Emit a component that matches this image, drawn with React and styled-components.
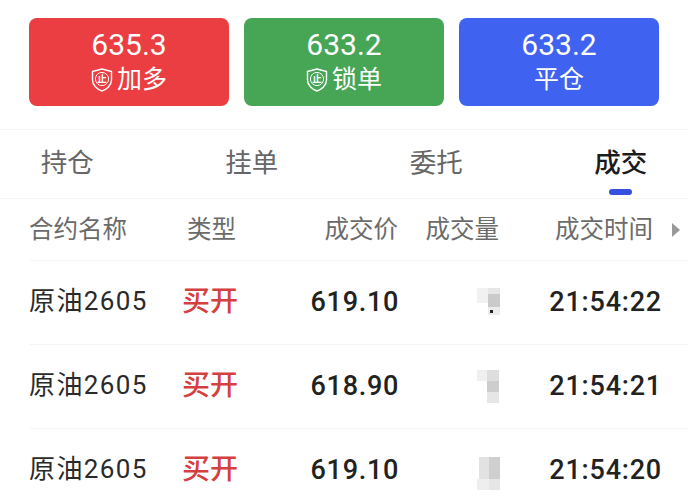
import styled, { createGlobalStyle } from 'styled-components'

const GlobalStyle = createGlobalStyle`
  html, body {
    margin: 0;
    background: #fff;
    font-family: Roboto, 'Noto Sans CJK SC', sans-serif;
  }
`

const actions = [
  { price: '635.3', label: '加多', color: '#eb3e42', shield: true },
  { price: '633.2', label: '锁单', color: '#47a556', shield: true },
  { price: '633.2', label: '平仓', color: '#3f63f0', shield: false },
]

const tabs = ['持仓', '挂单', '委托', '成交']

const trades = [
  {
    price: '619.10',
    time: '21:54:22',
    top: 27,
    blocks: [
      [0, 0, 11, 15, '#f1f1f1'],
      [11, 0, 12, 6, '#e6e6e6'],
      [11, 6, 12, 13, '#cacaca'],
      [11, 19, 12, 8, '#ececec'],
      [13, 22, 3, 3, '#222'],
    ],
  },
  {
    price: '618.90',
    time: '21:54:21',
    top: 25,
    blocks: [
      [0, 0, 10, 11, '#efefef'],
      [10, 0, 12, 11, '#dedede'],
      [10, 11, 12, 11, '#cdcdcd'],
      [10, 22, 12, 11, '#e6e6e6'],
    ],
  },
  {
    price: '619.10',
    time: '21:54:20',
    top: 28,
    blocks: [
      [2, 0, 10, 22, '#e2e2e2'],
      [12, 0, 11, 22, '#cfcfcf'],
      [0, 22, 12, 11, '#eeeeee'],
      [12, 22, 11, 11, '#e6e6e6'],
    ],
  },
]

const ShieldIcon = () => (
  <svg width="22" height="24" viewBox="0 0 22 24" fill="none">
    <path
      d="M11 1 L20.5 3.5 V12 C20.5 17.5 15.5 21.5 11 23 C6.5 21.5 1.5 17.5 1.5 12 V3.5 Z"
      stroke="currentColor"
      strokeWidth="1.4"
      strokeLinejoin="round"
    />
    <circle cx="11" cy="11" r="6.6" stroke="currentColor" strokeWidth="1" />
    <text x="11" y="14.4" fontSize="9.5" fontWeight="700" textAnchor="middle" fill="currentColor">止</text>
  </svg>
)

const App = () => {
  return (
    <Page>
      <GlobalStyle />
      <Actions>
        {actions.map((item) => (
          <ActionButton key={item.label} color={item.color}>
            <Price>{item.price}</Price>
            <ActionLabel>
              {item.shield && <ShieldIcon />}
              {item.label}
            </ActionLabel>
          </ActionButton>
        ))}
      </Actions>
      <Tabs>
        {tabs.map((tab, i) => (
          <Tab key={tab} active={i === 3}>{tab}</Tab>
        ))}
      </Tabs>
      <HeaderRow>
        <HeaderCell>合约名称</HeaderCell>
        <HeaderCell indent="4px">类型</HeaderCell>
        <HeaderCell right>成交价</HeaderCell>
        <HeaderCell right>成交量</HeaderCell>
        <TimeHeader>
          成交时间
          <MoreArrow />
        </TimeHeader>
      </HeaderRow>
      {trades.map((trade, i) => (
        <TradeRow key={i}>
          <Name>原油2605</Name>
          <Side>买开</Side>
          <Num>{trade.price}</Num>
          <Volume top={trade.top}>
            <Mosaic width="23" height="33" viewBox="0 0 23 33">
              {trade.blocks.map((b, j) => (
                <rect key={j} x={b[0]} y={b[1]} width={b[2]} height={b[3]} fill={b[4]} />
              ))}
            </Mosaic>
          </Volume>
          <Time>{trade.time}</Time>
        </TradeRow>
      ))}
    </Page>
  )
}

const Page = styled.div`
  width: 688px;
  height: 500px;
  overflow: hidden;
  background: #fff;
`

const Actions = styled.div`
  display: flex;
  gap: 15px;
  padding: 18px 29px 23px;
  border-bottom: 1px solid #f4f4f4;
`

const ActionButton = styled.div`
  width: 200px;
  height: 88px;
  box-sizing: border-box;
  padding-top: 9px;
  border-radius: 8px;
  background: ${(props) => props.color};
  color: #fff;
  display: flex;
  flex-direction: column;
  align-items: center;
`

const Price = styled.div`
  font-size: 30px;
  line-height: 36px;
`

const ActionLabel = styled.div`
  display: flex;
  align-items: center;
  gap: 4px;
  font-size: 25px;
  line-height: 34px;
`

const Tabs = styled.div`
  display: grid;
  grid-template-columns: repeat(4, 184.5px);
  height: 68px;
  margin-left: -25px;
  border-bottom: 1px solid #f4f4f4;
  width: 713px;
`

const Tab = styled.div`
  position: relative;
  text-align: center;
  font-size: 26.5px;
  line-height: 66px;
  color: ${(props) => (props.active ? '#1c1c1c' : '#666')};
  font-weight: ${(props) => (props.active ? 500 : 400)};
  &::after {
    content: '';
    display: ${(props) => (props.active ? 'block' : 'none')};
    position: absolute;
    left: 50%;
    bottom: 3px;
    width: 23px;
    height: 6px;
    margin-left: -12px;
    border-radius: 3px;
    background: #3450e0;
  }
`

const HeaderRow = styled.div`
  display: grid;
  grid-template-columns: 153px 117px 98px 101px 189px;
  align-items: center;
  height: 61px;
  margin-left: 30px;
  width: 658px;
  border-bottom: 1px solid #f4f4f4;
`

const HeaderCell = styled.div`
  font-size: 24.5px;
  line-height: 34px;
  margin-top: 1px;
  color: #6b6b6b;
  white-space: nowrap;
  text-align: ${(props) => (props.right ? 'right' : 'left')};
  padding-left: ${(props) => props.indent || 0};
  &:first-child {
    margin-left: -1px;
  }
`

const TimeHeader = styled(HeaderCell)`
  display: flex;
  justify-content: flex-end;
  align-items: center;
  gap: 18px;
  padding-right: 8px;
`

const MoreArrow = styled.span`
  width: 0;
  height: 0;
  margin-left: 1px;
  border-left: 8px solid #999;
  border-top: 7px solid transparent;
  border-bottom: 7px solid transparent;
`

const TradeRow = styled.div`
  display: grid;
  grid-template-columns: 153px 117px 98px 101px 189px;
  align-items: center;
  height: 83px;
  margin-left: 30px;
  width: 658px;
  border-bottom: 1px solid #f4f4f4;
`

const Name = styled.div`
  font-size: 26px;
  line-height: 36px;
  margin: -4px 0 0 -1px;
  letter-spacing: 1.4px;
  color: #2a2a2a;
  white-space: nowrap;
`

const Side = styled.div`
  font-size: 28px;
  line-height: 38px;
  margin: -1px 0 0 -1px;
  font-weight: 500;
  color: #d4403f;
`

const Num = styled.div`
  font-size: 27px;
  line-height: 36px;
  margin: -2px -1px 0 0;
  font-weight: 500;
  letter-spacing: 0.7px;
  color: #222;
  text-align: right;
`

const Volume = styled.div`
  display: flex;
  justify-content: flex-end;
  align-self: start;
  padding: ${(props) => props.top}px 0 0;
  margin-right: -1px;
`

const Mosaic = styled.svg`
  display: block;
`

const Time = styled.div`
  font-size: 27px;
  line-height: 36px;
  margin-top: -2px;
  font-weight: 500;
  letter-spacing: 0.8px;
  color: #222;
  text-align: right;
  padding-right: 26px;
`

export default App
